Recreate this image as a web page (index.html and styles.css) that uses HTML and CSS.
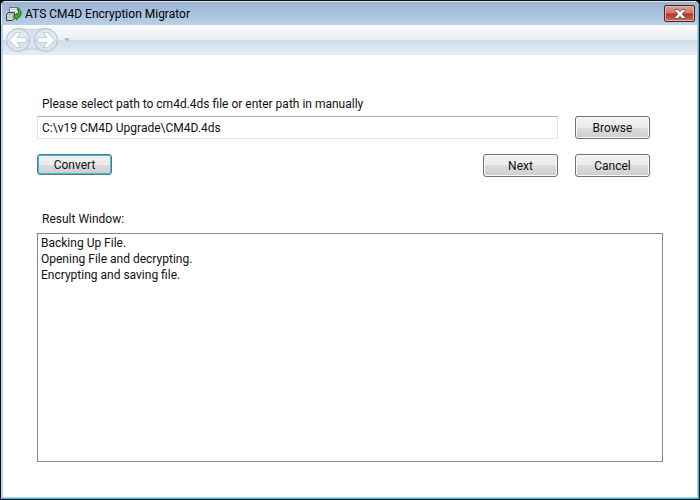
FILE: index.html
```html
<!DOCTYPE html>
<html lang="en">
<head>
<meta charset="utf-8">
<title>ATS CM4D Encryption Migrator</title>
<link rel="stylesheet" href="styles.css">
</head>
<body>
<div class="window">
  <header class="titlebar">
    <svg class="app-icon" viewBox="0 0 16 16" aria-hidden="true">
      <path d="M3.500 1.500h9v9h-9z" fill="#f2f4f4" stroke="#6d7275"/>
      <path d="M5 3.500h6M5 5.500h5" stroke="#c5c9cb"/>
      <path d="M.5 8.500l2-2h6v6l-2 2h-6z" fill="#b9b9b9" stroke="#3c3c3c"/>
      <path d="M1 9h5v5H1z" fill="#cfcfcf"/>
      <path d="M11 2.500c3.500 0 4.500 3 4 6-.5 2.500-2 3.500-4 3.500v2L7 10.500 11 7v2c1.500-.5 2-3 0-6.500z" fill="#2eae35" stroke="#14591b" stroke-width=".7"/>
    </svg>
    <h1 class="title">ATS CM4D Encryption Migrator</h1>
    <button class="close" type="button" aria-label="Close">
      <svg viewBox="0 0 12 10" aria-hidden="true"><path d="M1 .5h3l2 2.200L8 .5h3v1.200L8.300 5 11 8.300v1.200H8L6 7.300 4 9.500H1V8.300L3.700 5 1 1.700z" fill="#fff" stroke="#555b66" stroke-width=".9"/></svg>
    </button>
  </header>
  <nav class="toolbar" aria-label="History">
    <svg class="plate" viewBox="0 0 62 26" aria-hidden="true">
      <defs>
        <linearGradient id="disc" x2="0" y2="1"><stop offset="0" stop-color="#dce3ee"/><stop offset=".45" stop-color="#e8ecf4"/><stop offset=".5" stop-color="#d6dfeb"/><stop offset="1" stop-color="#dde5f0"/></linearGradient>
      </defs>
      <path d="M13 1.500q14 3 28 0v23q-14-6-28 0z" fill="#d9e2ee" stroke="#c3cddd"/>
      <g fill="url(#disc)" stroke="#b4bdcb"><circle cx="13" cy="13" r="11.500"/><circle cx="41" cy="13" r="11.500"/></g>
      <g fill="#fcfdfe" stroke="#bac4d3" stroke-width=".8" stroke-linejoin="round">
        <path d="M4 13l7.500-7.500h4.500L12 10.500h9.500v5H12l4 5h-4.500z"/>
        <path d="M50 13l-7.500-7.500H38l4 5h-9.500v5H42l-4 5h4.500z"/>
      </g>
    </svg>
    <button class="history" type="button" aria-label="Recent pages"><svg viewBox="0 0 8 6" aria-hidden="true"><path d="M.5 1h7L4 5z" fill="#a3aebd" stroke="#fff" stroke-width=".5"/></svg></button>
  </nav>
  <main class="content">
    <label class="caption" for="path">Please select path to cm4d.4ds file or enter path in manually</label>
    <div class="row">
      <input class="path" id="path" type="text" value="C:\v19 CM4D Upgrade\CM4D.4ds">
      <button class="btn" type="button">Browse</button>
    </div>
    <div class="row actions">
      <button class="btn focused" type="button">Convert</button>
      <span class="spacer"></span>
      <button class="btn" type="button">Next</button>
      <button class="btn" type="button">Cancel</button>
    </div>
    <label class="caption" for="result">Result Window:</label>
    <textarea class="result" id="result" readonly>Backing Up File.
Opening File and decrypting.
Encrypting and saving file.</textarea>
  </main>
</div>
</body>
</html>
```

FILE: styles.css
```css
* { box-sizing: border-box; }
body {
  margin: 0;
  background: #000;
  color: #111;
  font: 12px/16px Roboto, "Open Sans", sans-serif;
}
button, input, textarea { font: inherit; color: inherit; }
svg { display: block; }
.window {
  display: flex;
  flex-direction: column;
  min-height: 100vh;
  border: 1px solid #111;
  border-radius: 6px 6px 0 0;
  background: #fff;
  box-shadow: inset -1px -1px #16c5ee, inset -2px -2px #b9d0eb, inset 2px 0 #b9d0eb;
  overflow: hidden;
}
.titlebar {
  display: flex;
  align-items: center;
  height: 24px;
  padding: 1px 4px 0 5px;
  background: linear-gradient(#98b2d0, #b9cfe9);
  box-shadow: inset 1px 1px #dce8f5, inset -1px 0 #16c5ee;
}
.app-icon { width: 16px; height: 16px; }
.title { flex: 1; margin: 0 0 0 3px; font-size: 12px; font-weight: 400; color: #000; }
.close {
  display: flex;
  align-items: center;
  justify-content: center;
  width: 31px;
  height: 17px;
  padding: 0;
  border: 1px solid #52202a;
  border-radius: 2px;
  background: linear-gradient(#e0a297, #cf7263 48%, #b7321c 52%, #cb6b52);
  box-shadow: inset 0 0 0 1px #e5b0a6;
}
.close svg { width: 12px; height: 10px; }
.toolbar {
  display: flex;
  align-items: center;
  height: 30px;
  margin: 0 2px;
  padding-left: 2px;
  background: linear-gradient(#fdfdfe, #e9eef6 49%, #d0dbe9 50%, #e6edf7);
}
.plate { width: 62px; height: 26px; }
.history { padding: 0; border: 0; background: none; margin-left: -4px; }
.history svg { width: 8px; height: 6px; }
.content {
  flex: 1;
  display: flex;
  flex-direction: column;
  padding: 41px 36px 37px;
}
.caption { padding-left: 5px; }
.row { display: flex; align-items: center; margin-top: 4px; padding-right: 13px; gap: 17px; }
.path {
  flex: 1;
  min-width: 0;
  height: 23px;
  padding: 0 4px;
  border: 1px solid #e3e5e9;
  border-top-color: #abadb3;
  background: #fff;
}
.btn {
  width: 75px;
  height: 23px;
  padding: 0;
  border: 1px solid #707070;
  border-radius: 3px;
  background: linear-gradient(#f2f2f2, #ebebeb 50%, #dddddd 50%, #cdcdcd);
  box-shadow: inset 0 0 0 1px #fafafa;
}
.focused { height: 21px; box-shadow: inset 0 0 0 1px #1ac6f3; }
.actions { align-items: flex-start; margin: 15px 0 34px; }
.spacer { flex: 1; }
.result {
  flex: 1;
  width: 100%;
  margin-top: 6px;
  padding: 1px 3px;
  border: 1px solid #828790;
  background: #fff;
  resize: none;
}
```
